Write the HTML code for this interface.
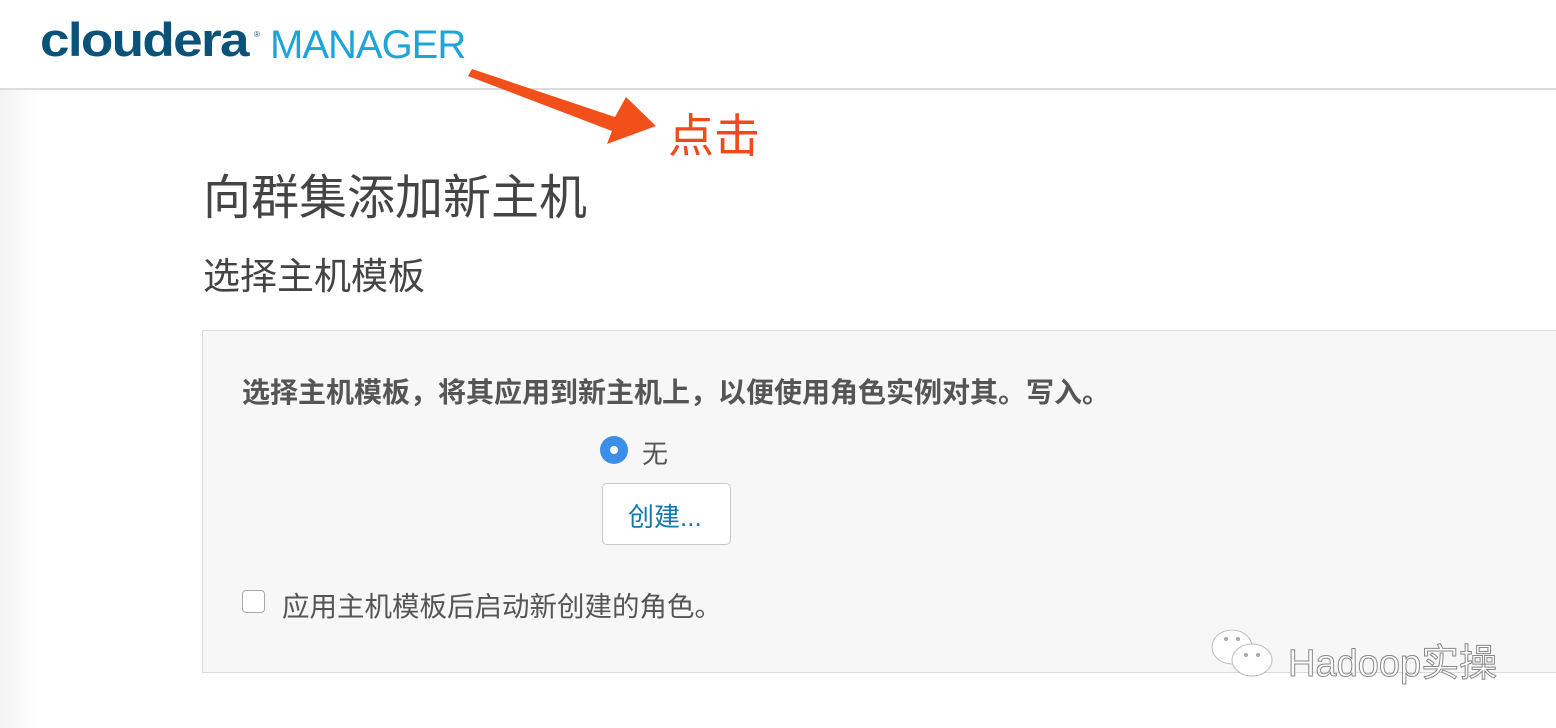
<!DOCTYPE html>
<html><head><meta charset="utf-8"><style>
body{margin:0;width:1556px;height:728px;overflow:hidden;background:#fff;font-family:"Liberation Sans","Noto Sans CJK SC",sans-serif;position:relative}
.hdr{position:absolute;left:0;top:0;width:1556px;height:88px;border-bottom:2px solid #dcdcdc;background:#fff}
.side{position:absolute;left:0;top:90px;width:40px;height:638px;background:linear-gradient(to right,#f3f3f3,#fff)}
.a{position:absolute;white-space:nowrap}
.box{position:absolute;left:202px;top:330px;width:1360px;height:341px;background:#f7f7f7;border:1.5px solid #dcdcdc}
</style></head><body>
<div class="hdr"></div><div class="side"></div>
<div class="a" style="left:40px;top:12px;font-size:47px;font-weight:bold;color:#0a5278;letter-spacing:-1.5px;transform:scaleX(1.13);transform-origin:0 0">cloudera</div>
<div class="a" style="left:254px;top:30px;font-size:8px;color:#0a5278">®</div>
<div class="a" style="left:270px;top:23px;font-size:40px;color:#1ea4d8;letter-spacing:-1px">MANAGER</div>
<svg class="a" style="left:0;top:0" width="800" height="200">
<polygon points="468,76 472,69 615,117 626,97 656,126 607,144 612,131" fill="#f2501b"/>
</svg>
<div class="a" style="left:668px;top:100px;font-size:46px;color:#f04a1a">点击</div>
<div class="a" style="left:203px;top:158px;font-size:48px;color:#444">向群集添加新主机</div>
<div class="a" style="left:203px;top:246px;font-size:37px;color:#444">选择主机模板</div>
<div class="box"></div>
<div class="a" style="left:242px;top:371px;font-size:28px;font-weight:bold;color:#555">选择主机模板，将其应用到新主机上，以便使用角色实例对其。写入。</div>
<div class="a" style="left:600px;top:436px;width:28px;height:28px;border-radius:50%;background:#3b8fe8"></div>
<div class="a" style="left:610px;top:446px;width:8px;height:8px;border-radius:50%;background:#fff"></div>
<div class="a" style="left:642px;top:434px;font-size:26px;color:#555">无</div>
<div class="a" style="left:602px;top:483px;width:127px;height:60px;border:1.5px solid #c8c8c8;border-radius:5px;background:#fff"></div>
<div class="a" style="left:628px;top:497px;font-size:26px;color:#1278a8">创建...</div>
<div class="a" style="left:242px;top:590px;width:21px;height:21px;border:1.5px solid #aaa;border-radius:4px;background:#fff"></div>
<div class="a" style="left:282px;top:584px;font-size:27.5px;color:#555">应用主机模板后启动新创建的角色。</div>
<svg class="a" style="left:1210px;top:625px" width="75" height="60">
<ellipse cx="22" cy="22" rx="20" ry="17" fill="#fff" stroke="#bbb"/>
<ellipse cx="42" cy="35" rx="20" ry="16" fill="#fff" stroke="#bbb"/>
<circle cx="16" cy="14" r="2" fill="#aaa"/><circle cx="28" cy="14" r="2" fill="#aaa"/>
<circle cx="36" cy="30" r="2" fill="#aaa"/><circle cx="48" cy="30" r="2" fill="#aaa"/>
</svg>
<div class="a" style="left:1288px;top:632px;font-size:38px;color:#fff;-webkit-text-stroke:1px #888">Hadoop实操</div>
</body></html>
